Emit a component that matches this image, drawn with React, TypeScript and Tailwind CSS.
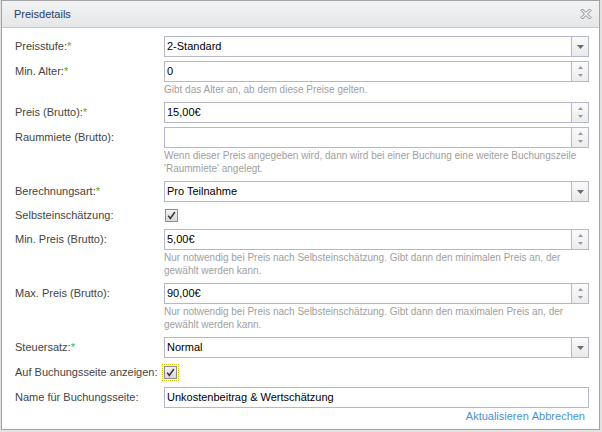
import React from "react";

const Req = () => <span className="text-[#3fae3f]">*</span>;

function ComboTrigger() {
  return (
    <div className="w-[17px] h-full shrink-0 border-l border-[#b5b8c8] bg-gradient-to-b from-[#fafafa] to-[#e9e9e9] flex items-center justify-center">
      <svg width="7" height="4" viewBox="0 0 7 4">
        <path d="M0 0 H7 L3.5 4 Z" fill="#6b6b6b" />
      </svg>
    </div>
  );
}

function SpinTrigger() {
  return (
    <div className="w-[17px] h-full shrink-0 border-l border-[#b5b8c8] bg-gradient-to-b from-[#fafafa] to-[#ececec] flex flex-col items-center justify-center gap-[5px]">
      <svg width="5" height="3" viewBox="0 0 5 3">
        <path d="M0 3 H5 L2.5 0 Z" fill="#9a9a9a" />
      </svg>
      <svg width="5" height="3" viewBox="0 0 5 3">
        <path d="M0 0 H5 L2.5 3 Z" fill="#9a9a9a" />
      </svg>
    </div>
  );
}

function Field({
  value,
  trigger,
}: {
  value: string;
  trigger?: "combo" | "spin";
}) {
  return (
    <div className="h-[21px] border border-[#b5b8c8] bg-white flex items-stretch">
      <div className="flex-1 pl-[2px] flex items-center text-[11px] text-black leading-none">
        {value}
      </div>
      {trigger === "combo" && <ComboTrigger />}
      {trigger === "spin" && <SpinTrigger />}
    </div>
  );
}

function Check({ focus }: { focus?: boolean }) {
  return (
    <div
      className={
        focus
          ? "ml-[-1px] p-px outline-1 outline-dotted outline-[#c8c200]"
          : "ml-px"
      }
    >
      <svg width="13" height="13" viewBox="0 0 13 13" className="block">
        <defs>
          <linearGradient id={focus ? "cg2" : "cg1"} x1="0" y1="0" x2="0" y2="1">
            <stop offset="0" stopColor="#f4f4f4" />
            <stop offset="1" stopColor="#d8d8d8" />
          </linearGradient>
        </defs>
        <rect x="0.5" y="0.5" width="12" height="12" fill={`url(#${focus ? "cg2" : "cg1"})`} stroke="#8c8f96" />
        <path d="M3.2 6.6 L5.3 9.4 L9.9 3" fill="none" stroke="#333" strokeWidth="1.5" />
      </svg>
    </div>
  );
}

function Hint({ lines }: { lines: string[] }) {
  return (
    <div className="mt-[1px] mb-[6px] text-[10px] leading-[13px] text-[#a0a0a0] whitespace-nowrap">
      {lines.map((l, i) => (
        <div key={i}>{l}</div>
      ))}
    </div>
  );
}

function Row({
  label,
  req,
  children,
  hint,
}: {
  label: string;
  req?: boolean;
  children: React.ReactNode;
  hint?: string[];
}) {
  return (
    <div className={hint ? "flex" : "flex mb-[4px]"}>
      <div className="w-[149px] shrink-0 text-[11px] leading-[21px] text-[#444]">
        {label}
        {req && <Req />}
      </div>
      <div className="flex-1 flex flex-col">
        {children}
        {hint && <Hint lines={hint} />}
      </div>
    </div>
  );
}

function CheckRow({ label, focus }: { label: string; focus?: boolean }) {
  return (
    <div className={focus ? "flex mb-[4px] h-[21px] items-center" : "flex mb-[4px] h-[19px] items-center"}>
      <div className="w-[149px] shrink-0 text-[11px] text-[#444]">{label}</div>
      <Check focus={focus} />
    </div>
  );
}

export default function App() {
  return (
    <div className="w-[602px] h-[432px] bg-[#e2e2e2] font-['Liberation_Sans',Arial,sans-serif]">
      <div className="ml-px w-[599px] h-[430px] border border-[#a4a4a4] bg-white flex flex-col">
        <div className="h-[27px] shrink-0 border-b border-[#c8c8c8] bg-gradient-to-b from-[#f2f3f4] to-[#e5e7e9] flex items-center justify-between pl-[12px] pr-[7px]">
          <div className="text-[11px] text-[#253e66]">Preisdetails</div>
          <svg width="12" height="12" viewBox="0 0 12 12">
            <path
              d="M1 2.5 L2.5 1 L6 4.5 L9.5 1 L11 2.5 L7.5 6 L11 9.5 L9.5 11 L6 7.5 L2.5 11 L1 9.5 L4.5 6 Z"
              fill="#ffffff"
              stroke="#6f6f6f"
              strokeWidth="0.9"
              strokeLinejoin="round"
            />
          </svg>
        </div>
        <div className="pt-[8px] pl-[13px] pr-[10px] flex flex-col">
          <Row label="Preisstufe:" req>
            <Field value="2-Standard" trigger="combo" />
          </Row>
          <Row label="Min. Alter:" req hint={["Gibt das Alter an, ab dem diese Preise gelten."]}>
            <Field value="0" trigger="spin" />
          </Row>
          <Row label="Preis (Brutto):" req>
            <Field value="15,00€" trigger="spin" />
          </Row>
          <Row
            label="Raummiete (Brutto):"
            hint={[
              "Wenn dieser Preis angegeben wird, dann wird bei einer Buchung eine weitere Buchungszeile",
              "'Raummiete' angelegt.",
            ]}
          >
            <Field value="" trigger="spin" />
          </Row>
          <Row label="Berechnungsart:" req>
            <Field value="Pro Teilnahme" trigger="combo" />
          </Row>
          <CheckRow label="Selbsteinschätzung:" />
          <Row
            label="Min. Preis (Brutto):"
            hint={[
              "Nur notwendig bei Preis nach Selbsteinschätzung. Gibt dann den minimalen Preis an, der",
              "gewählt werden kann.",
            ]}
          >
            <Field value="5,00€" trigger="spin" />
          </Row>
          <Row
            label="Max. Preis (Brutto):"
            hint={[
              "Nur notwendig bei Preis nach Selbsteinschätzung. Gibt dann den maximalen Preis an, der",
              "gewählt werden kann.",
            ]}
          >
            <Field value="90,00€" trigger="spin" />
          </Row>
          <Row label="Steuersatz:" req>
            <Field value="Normal" trigger="combo" />
          </Row>
          <CheckRow label="Auf Buchungsseite anzeigen:" focus />
          <div className="flex">
            <div className="w-[149px] shrink-0 text-[11px] leading-[21px] text-[#444]">
              Name für Buchungsseite:
            </div>
            <div className="flex-1">
              <Field value="Unkostenbeitrag & Wertschätzung" />
            </div>
          </div>
          <div className="mt-[2px] flex justify-end pr-[4px] text-[11px] leading-[13px] text-[#4a90d9]">
            <span>Aktualisieren</span>
            <span className="ml-[3px]">Abbrechen</span>
          </div>
        </div>
      </div>
    </div>
  );
}
